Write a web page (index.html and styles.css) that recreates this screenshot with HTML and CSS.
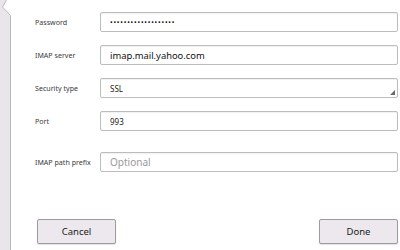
FILE: index.html
```html
<!DOCTYPE html>
<html lang="en">
<head>
  <meta charset="UTF-8">
  <title>Account settings - Incoming server</title>
  <link rel="stylesheet" href="styles.css">
</head>
<body>
  <div class="page">
    <div class="side">
      <svg class="notch" width="12" height="17" viewBox="0 0 12 17">
        <polygon points="0,0 6,0 2,7 10.5,16 10.5,17 0,17" fill="#e8e6ea"/>
        <polyline points="6.5,0 2.5,7 10.5,15.5 10.5,17" fill="none" stroke="#b8b8b8" stroke-width="1"/>
      </svg>
      <div class="side-fill"></div>
    </div>

    <div class="main">
      <div class="row">
        <label>Password</label>
        <div class="field pass">&bull;&bull;&bull;&bull;&bull;&bull;&bull;&bull;&bull;&bull;&bull;&bull;&bull;&bull;&bull;&bull;&bull;&bull;&bull;</div>
      </div>
      <div class="row">
        <label>IMAP server</label>
        <div class="field big">imap.mail.yahoo.com</div>
      </div>
      <div class="row">
        <label>Security type</label>
        <div class="field select">SSL</div>
      </div>
      <div class="row">
        <label>Port</label>
        <div class="field">993</div>
      </div>
      <div class="row prefix">
        <label>IMAP path prefix</label>
        <div class="field hint">Optional</div>
      </div>

      <div class="buttons">
        <button>Cancel</button>
        <button>Done</button>
      </div>
    </div>
  </div>
</body>
</html>
```

FILE: styles.css
```css
* {
  margin: 0;
  padding: 0;
  box-sizing: border-box;
  font-family: 'Noto Sans', 'Open Sans', sans-serif;
}

body {
  background: #ffffff;
  width: 400px;
  height: 250px;
  overflow: hidden;
}

.page {
  display: flex;
  height: 250px;
}

/* left panel edge with the pointer */
.side {
  width: 11px;
  display: flex;
  flex-direction: column;
}

.notch {
  display: block;
  flex: none;
}

.side-fill {
  flex: 1;
  width: 11px;
  background: #e8e6ea;
  border-right: 1px solid #b8b8b8;
}

.main {
  flex: 1;
  padding: 12px 2px 0 24px;
}

.row {
  display: flex;
  align-items: center;
  height: 20px;
  margin-bottom: 13px;
}

.row.prefix {
  margin-top: 21px;
}

.row label {
  width: 65px;
  font-size: 7.1px;
  color: #3a3a3a;
}

.field {
  flex: 1;
  height: 20px;
  border: 1px solid #bdbdbd;
  border-radius: 2px;
  box-shadow: inset 0 1px 1px rgba(0,0,0,0.06);
  padding: 0 9px;
  display: flex;
  align-items: center;
  font-size: 8px;
  color: #222;
  position: relative;
}

.field.pass {
  font-size: 7px;
  letter-spacing: 0.8px;
  color: #111;
}

.field.big {
  font-size: 9.4px;
  color: #111;
}

.field.hint {
  font-size: 10px;
  color: #9a9a9a;
}

.select::after {
  content: "";
  position: absolute;
  right: 2px;
  bottom: 2px;
  border-left: 5px solid transparent;
  border-bottom: 5px solid #6a6a6a;
}

.buttons {
  display: flex;
  justify-content: space-between;
  padding-left: 2px;
  margin-top: 47px;
}

.buttons button {
  width: 79px;
  height: 25px;
  background: #ece8ed;
  border: 1px solid #9c9c9c;
  border-radius: 2px;
  box-shadow: 0 1px 1px rgba(0,0,0,0.12);
  font-size: 9.5px;
  color: #1a1a1a;
}
```
